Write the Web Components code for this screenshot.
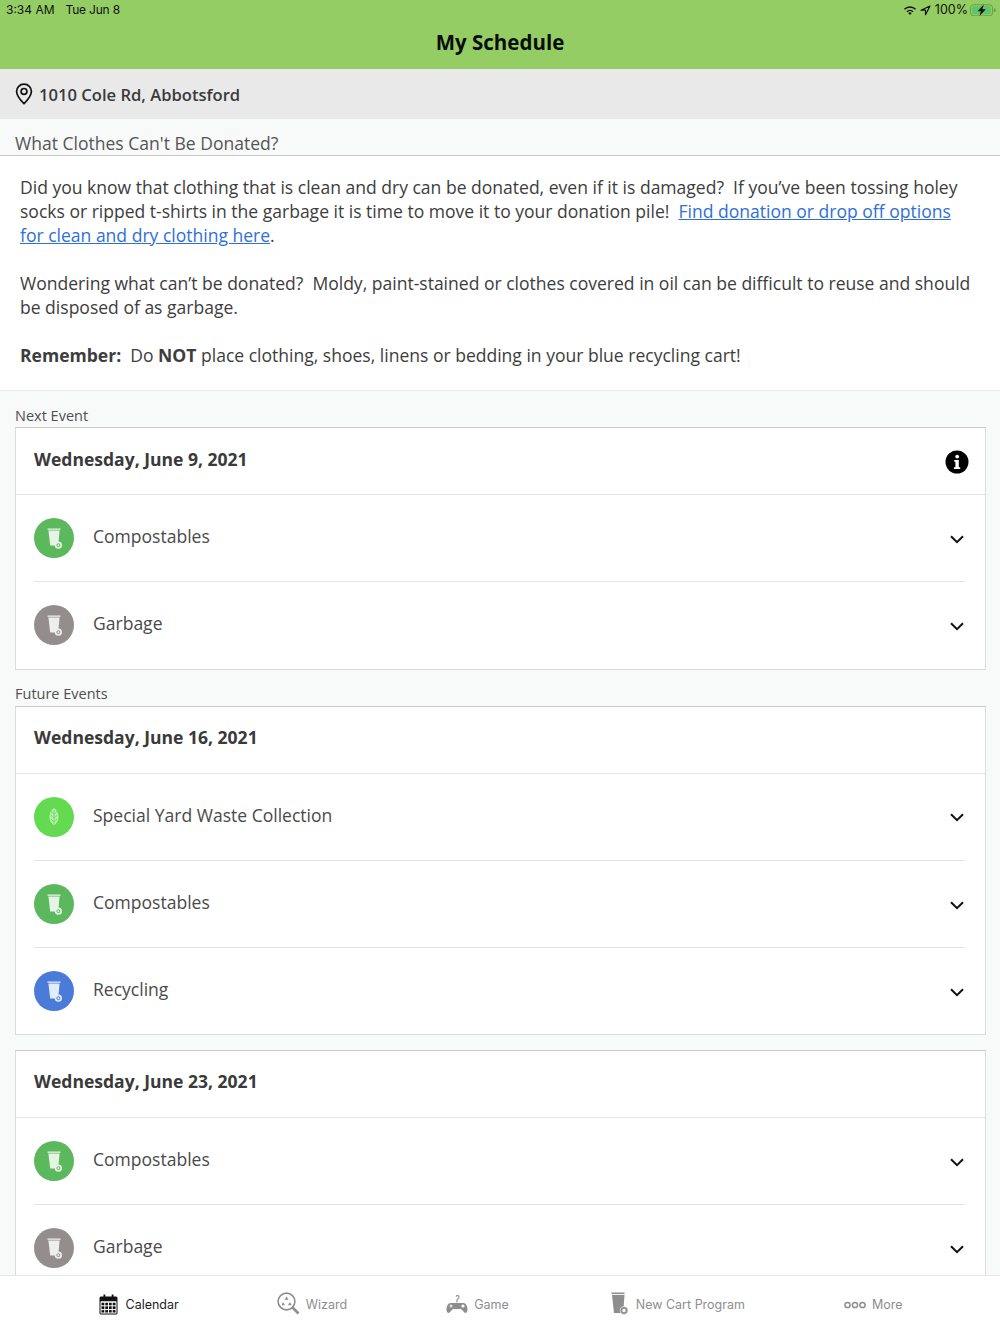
<!DOCTYPE html>
<html lang="en"><head><meta charset="utf-8"><title>My Schedule</title>
<style>
html,body{margin:0;padding:0;height:1334px;overflow:hidden;background:#f8f9f9;font-family:"Open Sans",sans-serif;color:#3d3d3d}
a{color:#2f6fd8}
</style></head><body>
<app-shell>
  <status-header slot="head"></status-header>
  <address-bar slot="head">1010 Cole Rd, Abbotsford</address-bar>
  <notice-panel slot="main" title-text="What Clothes Can't Be Donated?">
    <p>Did you know that clothing that is clean and dry can be donated, even if it is damaged?&nbsp; If you’ve been tossing holey socks or ripped t-shirts in the garbage it is time to move it to your donation pile!&nbsp; <a href="#">Find donation or drop off options for clean and dry clothing here</a>.</p>
    <p>Wondering what can’t be donated?&nbsp; Moldy, paint-stained or clothes covered in oil can be difficult to reuse and should be disposed of as garbage.</p>
    <p><b>Remember:</b>&nbsp; Do <b>NOT</b> place clothing, shoes, linens or bedding in your blue recycling cart!</p>
  </notice-panel>
  <section-label slot="main">Next Event</section-label>
  <event-card slot="main" date="Wednesday, June 9, 2021" info>
    <event-row kind="compost">Compostables</event-row>
    <event-row kind="garbage">Garbage</event-row>
  </event-card>
  <section-label slot="main">Future Events</section-label>
  <event-card slot="main" date="Wednesday, June 16, 2021">
    <event-row kind="yard">Special Yard Waste Collection</event-row>
    <event-row kind="compost">Compostables</event-row>
    <event-row kind="recycle">Recycling</event-row>
  </event-card>
  <event-card slot="main" date="Wednesday, June 23, 2021" style="margin-top:14.500px">
    <event-row kind="compost">Compostables</event-row>
    <event-row kind="garbage">Garbage</event-row>
  </event-card>
  <tab-bar slot="foot"></tab-bar>
</app-shell>
<script>
const CART=(c)=>`<path d="M-6.500-9.500H6.500V-8.200H-6.500Z" fill="${c}"/><path d="M-5.600-7.600H5.600L4.200 7.500H-3.800Z" fill="${c}"/><circle cx="4.400" cy="7.200" r="3.600" fill="${c}"/><circle cx="4.400" cy="7.200" r="1.500" fill="none" stroke="currentColor" stroke-width="1"/>`;
class Base extends HTMLElement{
  constructor(){super();this.attachShadow({mode:'open'});}
  connectedCallback(){this.shadowRoot.innerHTML=this.render();}
}
customElements.define('app-shell',class extends Base{render(){return `<style>
:host{display:flex;flex-direction:column;height:1334px;overflow:hidden}
.main{flex:1;min-height:0;overflow:hidden;display:block}
</style><slot name="head"></slot><div class="main"><slot name="main"></slot></div><slot name="foot"></slot>`}});
customElements.define('status-header',class extends Base{render(){return `<style>
:host{display:block;height:69px;background:#93cd63;color:#111;font-family:Inter,"Liberation Sans",sans-serif}
.st{height:20px;display:flex;align-items:center;justify-content:space-between;padding:0 4px 0 6px;font-size:12.500px;line-height:20px}
.l{display:flex;gap:11px;font-size:12px}.r{display:flex;align-items:center;gap:3px}
h1{margin:2px 0 0;text-align:center;font:700 20.500px/40px "Open Sans",sans-serif;color:#0c0c0c}
svg{display:block}
</style><div class="st"><div class="l"><span>3:34 AM</span><span style="letter-spacing:-.2px">Tue Jun 8</span></div><div class="r">
<svg width="14" height="11" viewBox="0 0 15 11"><path d="M7.500 10.300l-1.900-2a2.700 2.700 0 0 1 3.800 0ZM3.700 6.400a5.300 5.300 0 0 1 7.600 0l-1.100 1.100a3.800 3.800 0 0 0-5.400 0ZM1 3.700a9 9 0 0 1 13 0l-1.100 1.100a7.500 7.500 0 0 0-10.800 0Z" fill="#111"/></svg>
<svg width="11" height="11" viewBox="0 0 11 11"><path d="M10 1L1 5.200H5.500V9.700Z" fill="none" stroke="#111" stroke-width="1.200" stroke-linejoin="round"/></svg>
<span style="margin-left:1px">100%</span>
<svg style="margin-left:-1px" width="26" height="12.500" viewBox="0 0 26 12"><rect x=".5" y=".5" width="22" height="11" rx="3" fill="none" stroke="#6f9a4c"/><rect x="2" y="2" width="19" height="8" rx="1.600" fill="#5fc46a"/><path d="M23.800 4v4a2 2 0 0 0 0-4Z" fill="#6f9a4c"/><path d="M13.800 .3L7.600 7h3.300L9.400 11.700 15.800 5H12.400Z" fill="#111"/></svg>
</div></div><h1>My Schedule</h1>`}});
customElements.define('address-bar',class extends Base{render(){return `<style>
:host{display:flex;align-items:center;gap:6px;height:50px;background:#e9e9ea;padding-left:15px;font:600 16.600px "Open Sans",sans-serif;color:#3a3a3a}
span{margin-top:1px}
</style><svg width="18" height="22" viewBox="0 0 18 22"><path d="M9 1.200C4.700 1.200 1.600 4.400 1.600 8.500c0 3.600 3 7.700 7.400 12.200 4.400-4.500 7.400-8.600 7.400-12.200 0-4.100-3.100-7.300-7.400-7.300Z" fill="none" stroke="#111" stroke-width="1.700" stroke-linejoin="round"/><circle cx="9" cy="8.400" r="2.900" fill="none" stroke="#111" stroke-width="1.700"/></svg><span><slot></slot></span>`}});
customElements.define('notice-panel',class extends Base{render(){return `<style>
:host{display:block;background:#fff;border-bottom:1px solid #ececec}
.t{height:37px;box-sizing:border-box;background:#f8f9f9;border-bottom:1px solid #c8c8c8;padding:12px 15px 0;font-size:17.550px;line-height:24px;color:#555;overflow:hidden}
.b{padding:19px 25px 23px 20px;font-size:17.550px;line-height:24px;color:#3d3d3d}
::slotted(p){margin:0 0 24px}
::slotted(p:last-child){margin:0}
</style><div class="t">${this.getAttribute('title-text')}</div><div class="b"><slot></slot></div>`}});
customElements.define('section-label',class extends Base{render(){return `<style>
:host{display:block;margin-top:13.500px;padding:0 15px 1.500px;font-size:14.500px;line-height:21px;color:#4f4f4f}
</style><slot></slot>`}});
customElements.define('event-card',class extends Base{render(){
const info=this.hasAttribute('info')?`<svg width="24" height="24" viewBox="0 0 24 24"><circle cx="12" cy="12" r="11.500" fill="#000"/><circle cx="12.200" cy="6.600" r="1.900" fill="#fff"/><path d="M9.200 10h4.600v7.200h1.400V19H8.900v-1.800h1.500v-5.400H9.200Z" fill="#fff"/></svg>`:'';
return `<style>
:host{display:block;margin:0 14.500px 0 15px;background:#fff;border:1px solid #dcdcdc;border-top-color:#c9c9c9}
.h{height:67px;box-sizing:border-box;display:flex;align-items:center;justify-content:space-between;padding:0 16px 0 18px;border-bottom:1px solid #e4e4e4}
.d{font-weight:700;font-size:17.550px;color:#3a3a3a;margin-top:-5px}
svg{display:block;margin-top:1px}
.rows{display:flex;flex-direction:column;padding:0 19.500px 0 18px}
::slotted(event-row:not(:last-child)){border-bottom:1px solid #e4e4e4}
</style><div class="h"><span class="d">${this.getAttribute('date')}</span>${info}</div><div class="rows"><slot></slot></div>`}});
const COL={compost:'#5cb85c',garbage:'#948d8d',yard:'#63da50',recycle:'#4b7bd8'};
customElements.define('event-row',class extends Base{render(){
const k=this.getAttribute('kind'),c=COL[k];
const g=k==='yard'
?`<path d="M0-9C3.400-6.600 4.600-3 4.600 0 4.600 4 2.400 6.800 0 8.600-2.400 6.800-4.600 4-4.600 0-4.600-3-3.400-6.600 0-9Z" fill="#fff" opacity=".55"/><path d="M0-7V10M0-3L-3-5.500M0-3L3-5.500M0 1L-3.500-2M0 1L3.500-2M0 5L-3 2M0 5L3 2" stroke="${c}" stroke-width=".8" fill="none"/>`
:`<g style="color:${c}" opacity=".85">${CART('#fff')}</g>`;
return `<style>
:host{display:flex;align-items:center;height:86.300px;font-size:17.550px;color:#4a4a4a}
.i{width:40px;height:40px;flex:none;margin-right:19px;display:block}
.t{flex:1;margin-top:-4px}
.c{display:block;margin:2px 1.500px 0 0}
</style><svg class="i" viewBox="-20 -20 40 40"><circle r="20" fill="${c}"/>${g}</svg><span class="t"><slot></slot></span>
<svg class="c" width="14" height="9" viewBox="0 0 14 9"><path d="M1 1.200L7 7.200 13 1.200" fill="none" stroke="#111" stroke-width="2"/></svg>`}});
customElements.define('tab-bar',class extends Base{render(){
const g='#8e8e8e';
return `<style>
:host{display:flex;flex:none;height:59px;box-sizing:border-box;background:#fff;border-top:1px solid #e6e6e6;font:12.500px Inter,"Liberation Sans",sans-serif;color:#8e8e8e}
.t{display:flex;align-items:center;gap:7px;height:57px}
.a{color:#1c1c1c}
svg{display:block}
</style>
<div class="t a" style="margin-left:99px"><svg width="19" height="21" viewBox="0 0 19 21"><rect x=".5" y="2.500" width="18" height="18" rx="1.500" fill="#111"/><path d="M2 8h15M2 11.800h15M2 15.600h15M5.800 8v11M9.500 8v11M13.200 8v11" stroke="#fff" stroke-width="1"/><rect x="2" y="8" width="15" height="11" fill="none" stroke="#fff" stroke-width="1"/><rect x="4.500" y=".5" width="1.800" height="4" fill="#111"/><rect x="12.700" y=".5" width="1.800" height="4" fill="#111"/></svg><span style="margin-left:.5px">Calendar</span></div>
<div class="t" style="margin-left:98px;gap:6px"><svg width="23" height="23" viewBox="0 0 23 23" style="margin-top:-3px"><circle cx="9.500" cy="9.500" r="8.400" fill="none" stroke="${g}" stroke-width="1.600"/><path d="M15.500 15.500L21.500 21.500" stroke="${g}" stroke-width="2.600"/><path d="M9.500 4.500l2 3.200h-4ZM13 10l1.600 3.200H11ZM6 10l2 3.200H4.600Z" fill="${g}"/></svg><span>Wizard</span></div>
<div class="t" style="margin-left:99px;gap:6px"><svg width="22" height="24" viewBox="0 0 22 24" style="margin-top:-3px"><path d="M4.500 12h13c2.500 0 4 3 4 6.500 0 3.500-2.500 4.500-4 2L15 18H7l-2.500 2.500c-1.500 2.500-4 1.500-4-2C.5 15 2 12 4.500 12Z" fill="${g}"/><path d="M11 11.500V9c0-1.200 2-1.200 2-3 0-1.800-2.500-1.800-3-.5" fill="none" stroke="${g}" stroke-width="1.100"/><path d="M3.500 15h3M5 13.500v3" stroke="#fff" stroke-width="1"/><circle cx="17" cy="15" r="1.600" fill="#fff"/></svg><span>Game</span></div>
<div class="t" style="margin-left:102px;gap:7px"><svg width="18" height="23" viewBox="0 0 18 23" style="margin-top:-3px"><rect x=".5" y=".5" width="13" height="1.600" fill="${g}"/><path d="M1 3H13.500L12.200 21H3Z" fill="${g}"/><circle cx="13" cy="18.500" r="4" fill="${g}" stroke="#fff" stroke-width=".6"/><circle cx="13" cy="18.500" r="1.700" fill="#fff"/></svg><span>New Cart Program</span></div>
<div class="t" style="margin-left:99px;gap:6px"><svg width="22" height="8" viewBox="0 0 22 8"><g fill="none" stroke="${g}" stroke-width="1.500"><circle cx="3.500" cy="4" r="2.600"/><circle cx="11" cy="4" r="2.600"/><circle cx="18.500" cy="4" r="2.600"/></g></svg><span>More</span></div>`}});
</script>
</body></html>
